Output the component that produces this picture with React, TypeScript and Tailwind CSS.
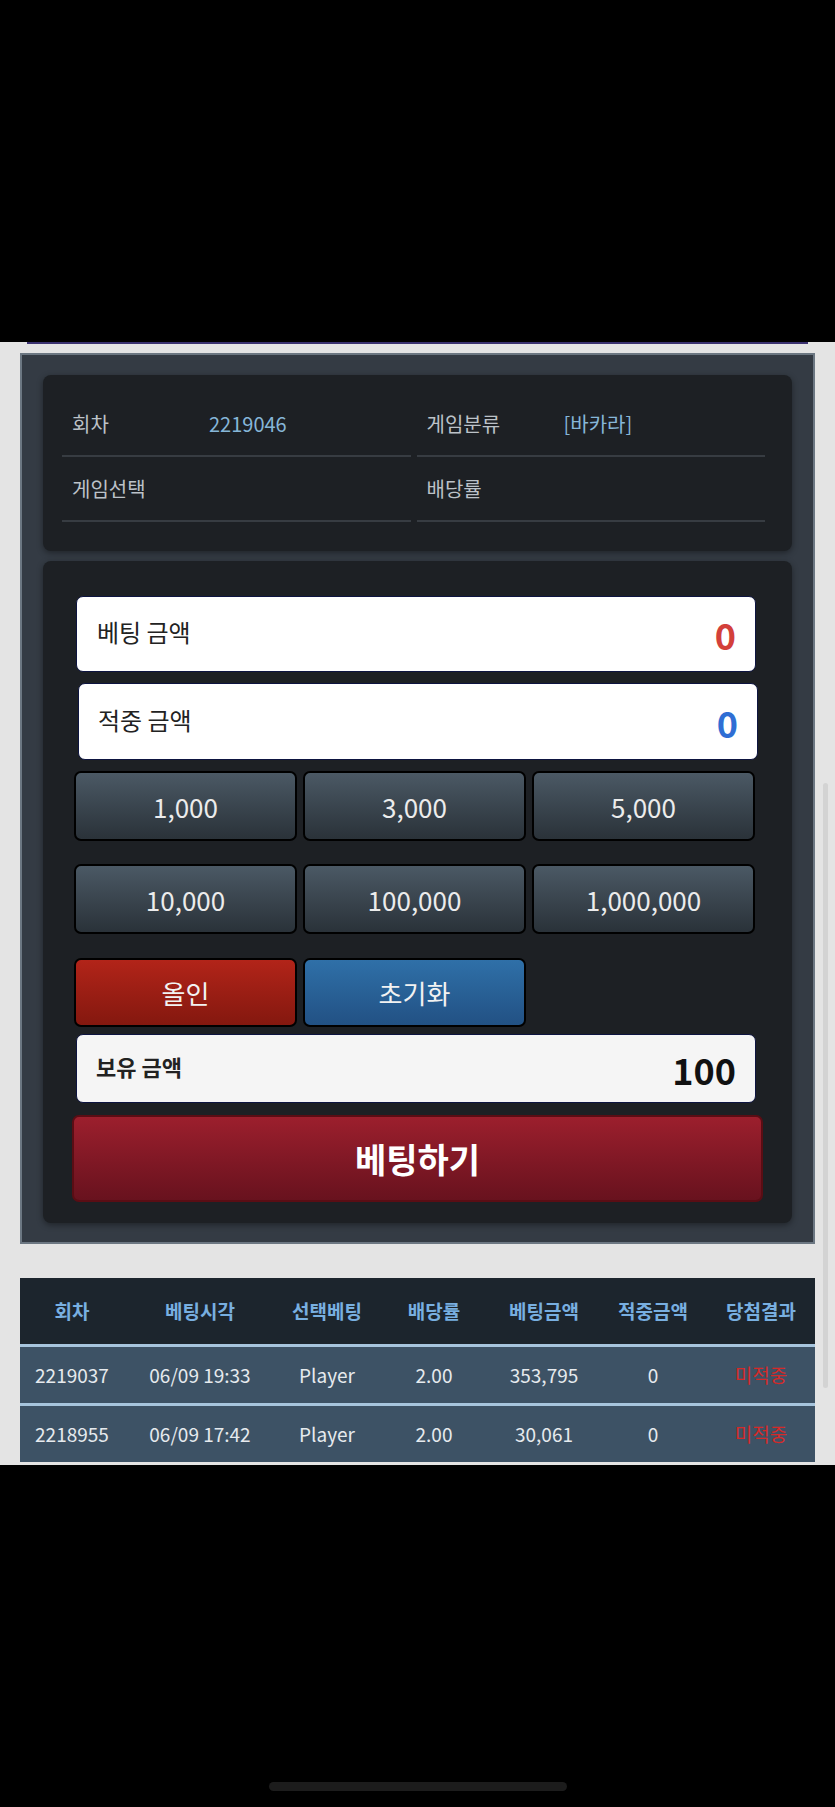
const FONT = "font-['Noto_Sans_CJK_KR',_'Noto_Sans',_sans-serif]"

const chips = ['1,000', '3,000', '5,000', '10,000', '100,000', '1,000,000']

const rows = [
  { round: '2219037', time: '06/09 19:33', pick: 'Player', rate: '2.00', bet: '353,795', win: '0', result: '미적중' },
  { round: '2218955', time: '06/09 17:42', pick: 'Player', rate: '2.00', bet: '30,061', win: '0', result: '미적중' },
]

const headers = ['회차', '베팅시각', '선택베팅', '배당률', '베팅금액', '적중금액', '당첨결과']

function InfoCell({ label, value }: { label: string; value?: string }) {
  return (
    <div className="flex items-center h-[65px] pl-[10px] border-b-2 border-[#373c42]">
      <span className="w-[137px] text-[20px] text-[#bcc2c8]">{label}</span>
      {value && <span className="text-[20px] text-[#86b6d8]">{value}</span>}
    </div>
  )
}

function ChipButton({ label }: { label: string }) {
  return (
    <button className="h-[70px] rounded-[7px] border-2 border-black bg-gradient-to-b from-[#4b5965] to-[#2a3239] text-[26px] text-[#ececec]">
      {label}
    </button>
  )
}

export default function App() {
  return (
    <div className={`relative w-[835px] h-[1807px] bg-[#e4e4e4] flex flex-col ${FONT}`}>
      {/* Top bar */}
      <div className="h-[342px] bg-black shrink-0" />
      <div className="mx-[27px] h-[2px] bg-[#3a3170]" />

      {/* Betting panel */}
      <div className="mt-[9px] mx-[20px] border-2 border-[#6c7782] bg-[#343b44] pt-[20px] pb-[19px] px-[21px]">
        <div className="rounded-lg bg-[#1d2024] shadow-[0_2px_6px_rgba(0,0,0,0.4)] pt-[17px] pb-[29px] pl-[19px] pr-[27px]">
          <div className="grid grid-cols-2 gap-x-[6px]">
            <InfoCell label="회차" value="2219046" />
            <InfoCell label="게임분류" value="[바카라]" />
            <InfoCell label="게임선택" />
            <InfoCell label="배당률" />
          </div>
        </div>

        <div className="mt-[10px] rounded-lg bg-[#1d2024] shadow-[0_2px_6px_rgba(0,0,0,0.4)] pt-[35px] pb-[21px] pl-[33px] pr-[36px]">
          <div className="flex items-center justify-between h-[76px] rounded-[7px] border border-[#0d1440] bg-white pl-[20px] pr-[19px]">
            <span className="text-[24px] text-[#222] -mt-[4px]">베팅 금액</span>
            <span className="text-[36px] font-bold text-[#d3403a]">0</span>
          </div>
          <div className="mt-[11px] ml-[2px] mr-[-2px] flex items-center justify-between h-[77px] rounded-[7px] border border-[#0d1440] bg-white pl-[19px] pr-[19px]">
            <span className="text-[24px] text-[#222] -mt-[4px]">적중 금액</span>
            <span className="text-[36px] font-bold text-[#2f6ed4]">0</span>
          </div>

          <div className="mt-[11px] -ml-[2px] grid grid-cols-3 gap-x-[6px] gap-y-[23px] w-[681px]">
            {chips.map((c) => (
              <ChipButton key={c} label={c} />
            ))}
          </div>

          <div className="mt-[24px] -ml-[2px] grid grid-cols-3 gap-x-[6px] w-[681px]">
            <button className="h-[69px] rounded-[7px] border-2 border-black bg-gradient-to-b from-[#b22419] to-[#84180f] text-[26px] text-[#f2f2f2]">
              올인
            </button>
            <button className="h-[69px] rounded-[7px] border-2 border-black bg-gradient-to-b from-[#2f70a8] to-[#225184] text-[26px] text-[#f2f2f2]">
              초기화
            </button>
          </div>

          <div className="mt-[7px] flex items-center justify-between h-[69px] rounded-[7px] border border-[#0d1440] bg-[#f5f5f5] pl-[19px] pr-[19px]">
            <span className="text-[22px] font-bold text-[#222] -mt-[5px]">보유 금액</span>
            <span className="text-[36px] font-bold text-[#111]">100</span>
          </div>

          <button className="mt-[12px] -ml-[4px] w-[691px] h-[87px] rounded-[7px] border-2 border-[#5a0d14] bg-gradient-to-b from-[#9c1f2d] to-[#68121e] text-[34px] font-bold text-white">
            베팅하기
          </button>
        </div>
      </div>

      {/* History table */}
      <div className="mt-[34px] mx-[20px]">
        <div className="grid grid-cols-[104px_152px_102px_112px_108px_110px_106px] h-[69px] items-center bg-[#1c252d] border-b-[3px] border-[#a7c5dd]">
          {headers.map((h) => (
            <div key={h} className="text-center text-[19px] font-bold text-[#78afe0]">
              {h}
            </div>
          ))}
        </div>
        {rows.map((r, i) => (
          <div
            key={r.round}
            className={`grid grid-cols-[104px_152px_102px_112px_108px_110px_106px] items-center bg-[#3d5265] text-[19px] text-[#e6eaee] text-center ${i === 0 ? 'h-[59px] border-b-[3px] border-[#a7c5dd]' : 'h-[56px]'}`}
          >
            <div>{r.round}</div>
            <div>{r.time}</div>
            <div>{r.pick}</div>
            <div>{r.rate}</div>
            <div>{r.bet}</div>
            <div>{r.win}</div>
            <div className="text-[#d42a2a]">{r.result}</div>
          </div>
        ))}
      </div>

      {/* Bottom bar */}
      <div className="mt-auto h-[342px] bg-black flex items-end justify-center pb-[16px]">
        <div className="w-[298px] h-[9px] rounded-full bg-[#1c1c1c]" />
      </div>

      {/* Scroll indicator */}
      <div className="absolute left-[823px] top-[783px] w-[5px] h-[605px] rounded-full bg-[#d3d3d3]" />
    </div>
  )
}
